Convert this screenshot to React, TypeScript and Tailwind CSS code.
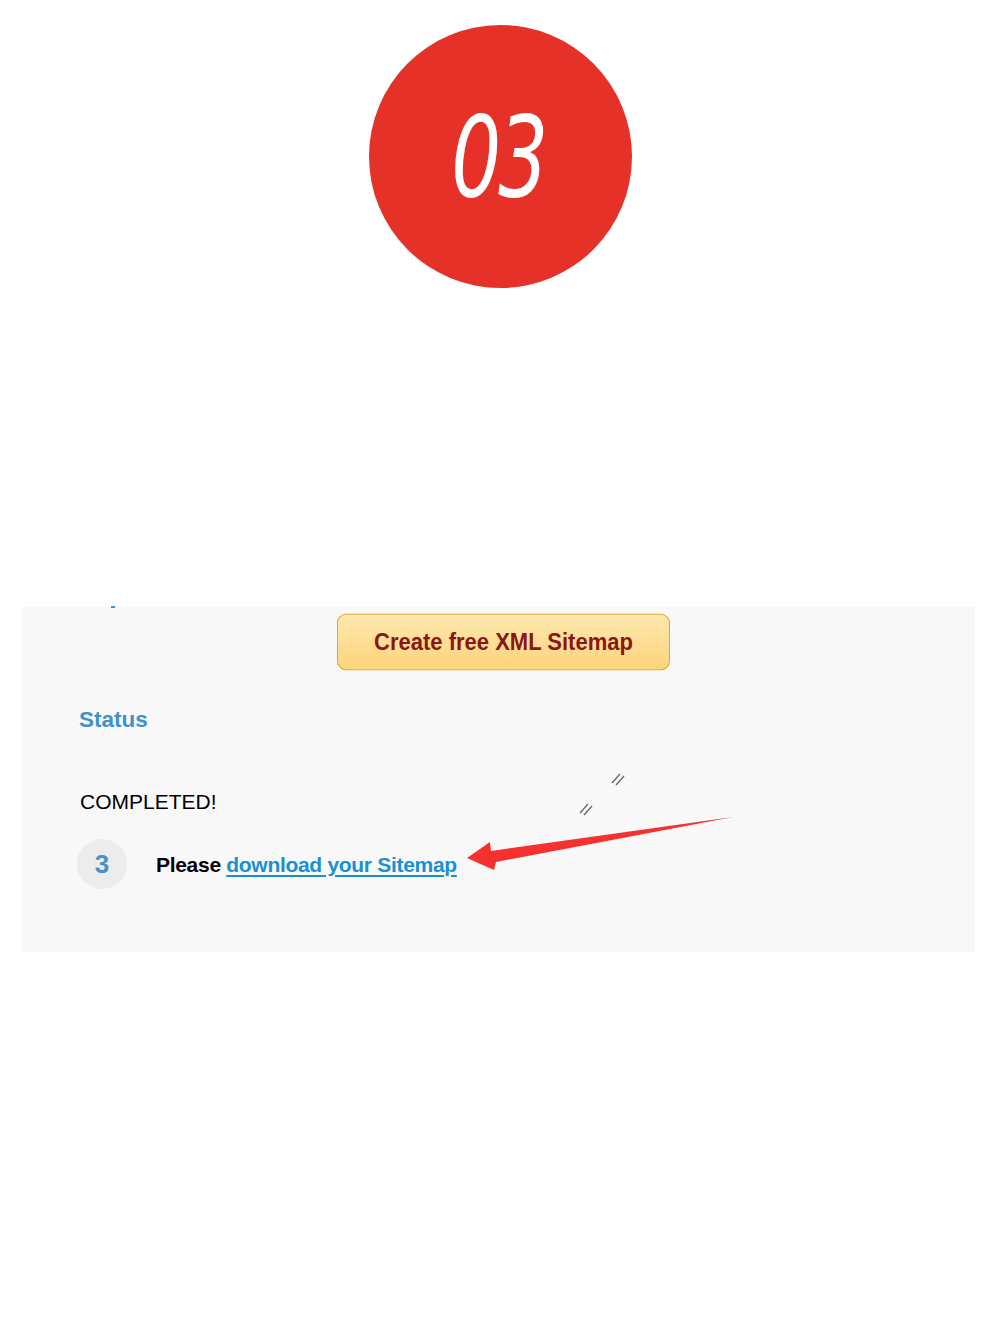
import React from "react";

const arial = { fontFamily: '"Liberation Sans", Arial, sans-serif' };

const Slash = ({ className }: { className: string }) => (
  <svg className={className} width="16" height="16" viewBox="0 0 16 16">
    <line x1="2" y1="12" x2="10" y2="3" stroke="#6b6b6b" strokeWidth="1.4" />
    <line x1="6" y1="14" x2="14" y2="5" stroke="#6b6b6b" strokeWidth="1.4" />
  </svg>
);

export default function App() {
  return (
    <div className="w-[1000px] h-[1333px] bg-white" style={arial}>
      {/* step badge */}
      <div className="flex justify-center pt-[25px]">
        <div className="w-[263px] h-[263px] rounded-full bg-[#e53127] flex items-center justify-center">
          <span
            className="text-white italic text-[112px] leading-none tracking-[-4px] scale-x-[0.7] translate-x-[-2px]"
            style={{ fontFamily: '"DejaVu Sans", sans-serif', fontWeight: 400 }}
          >
            03
          </span>
        </div>
      </div>

      {/* screenshot panel */}
      <div className="relative ml-[22px] w-[953px] mt-[319px] h-[345px] bg-[#f8f8f8]">
        <div className="absolute left-[89px] top-[-1px] w-[4px] h-[2px] bg-[#3a9ad9]" />

        <div className="flex justify-center pt-[8px] pl-[10px]">
          <button className="w-[333px] h-[54px] rounded-[9px] border border-[#e0a826] bg-gradient-to-b from-[#fee8ae] to-[#fcd47a] text-[#8a1616] font-bold text-[22px] scale-y-[1.05]">
            Create free XML Sitemap
          </button>
        </div>

        <div className="pl-[57px] mt-[38px] text-[22.5px] font-bold text-[#3f91c9] leading-[26px]">
          Status
        </div>

        <div className="pl-[58px] mt-[56px] text-[21px] text-black leading-[26px]">
          COMPLETED!
        </div>

        <div className="flex items-center pl-[55px] mt-[24px]">
          <div className="w-[50px] h-[50px] rounded-full bg-[#ececec] flex items-center justify-center text-[26px] font-bold text-[#4a90c8]">
            3
          </div>
          <div className="ml-[29px] text-[21px] leading-[26px] tracking-[-0.3px] pt-[2px]">
            <span className="font-bold text-black">Please </span>
            <a className="text-[#1b8fd2] underline underline-offset-[3px] font-semibold" href="#">
              download your Sitemap
            </a>
          </div>
        </div>

        <Slash className="absolute left-[588px] top-[164px]" />
        <Slash className="absolute left-[556px] top-[194px]" />

        <svg className="absolute left-0 top-0 pointer-events-none" width="953" height="345">
          <polygon
            points="445,251 468,235 469,244 711,210 474,255 472,263"
            fill="#f5312f"
          />
        </svg>
      </div>
    </div>
  );
}
